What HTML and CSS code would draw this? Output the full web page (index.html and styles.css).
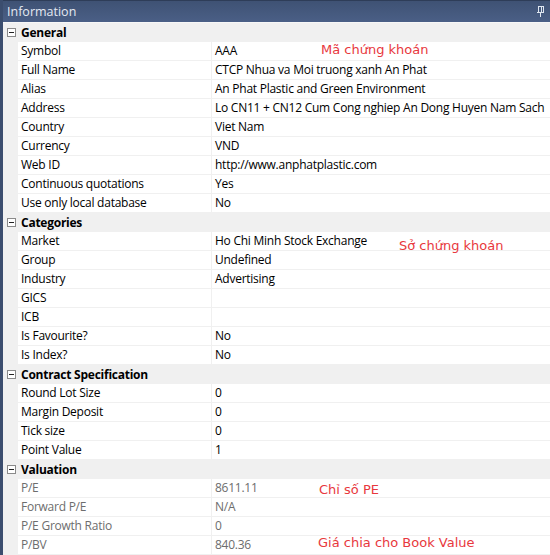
FILE: index.html
```html
<!DOCTYPE html>
<html>
<head>
<meta charset="utf-8">
<link rel="stylesheet" href="styles.css">
</head>
<body>
<div class="panel">
  <div class="titlebar">
    <span class="title">Information</span>
    <svg class="pin" width="9" height="12" viewBox="0 0 9 12"><path d="M2 1h5M2 1v6M7 1v6M5 1v6M1 7h7M4.5 7v5" stroke="#dfe6f0" stroke-width="1" fill="none" shape-rendering="crispEdges"/></svg>
  </div>
  <div class="grid">
    <div class="section"><span class="toggle"></span><span class="stitle">General</span></div>
    <div class="row"><div class="label">Symbol</div><div class="value">AAA</div></div>
    <div class="row"><div class="label">Full Name</div><div class="value">CTCP Nhua va Moi truong xanh An Phat</div></div>
    <div class="row"><div class="label">Alias</div><div class="value">An Phat Plastic and Green Environment</div></div>
    <div class="row"><div class="label">Address</div><div class="value">Lo CN11 + CN12 Cum Cong nghiep An Dong Huyen Nam Sach</div></div>
    <div class="row"><div class="label">Country</div><div class="value">Viet Nam</div></div>
    <div class="row"><div class="label">Currency</div><div class="value">VND</div></div>
    <div class="row"><div class="label">Web ID</div><div class="value">http://www.anphatplastic.com</div></div>
    <div class="row"><div class="label">Continuous quotations</div><div class="value">Yes</div></div>
    <div class="row"><div class="label">Use only local database</div><div class="value">No</div></div>
    <div class="section"><span class="toggle"></span><span class="stitle">Categories</span></div>
    <div class="row"><div class="label">Market</div><div class="value">Ho Chi Minh Stock Exchange</div></div>
    <div class="row"><div class="label">Group</div><div class="value">Undefined</div></div>
    <div class="row"><div class="label">Industry</div><div class="value">Advertising</div></div>
    <div class="row"><div class="label">GICS</div><div class="value"></div></div>
    <div class="row"><div class="label">ICB</div><div class="value"></div></div>
    <div class="row"><div class="label">Is Favourite?</div><div class="value">No</div></div>
    <div class="row"><div class="label">Is Index?</div><div class="value">No</div></div>
    <div class="section"><span class="toggle"></span><span class="stitle">Contract Specification</span></div>
    <div class="row"><div class="label">Round Lot Size</div><div class="value">0</div></div>
    <div class="row"><div class="label">Margin Deposit</div><div class="value">0</div></div>
    <div class="row"><div class="label">Tick size</div><div class="value">0</div></div>
    <div class="row"><div class="label">Point Value</div><div class="value">1</div></div>
    <div class="section"><span class="toggle"></span><span class="stitle">Valuation</span></div>
    <div class="row ro"><div class="label">P/E</div><div class="value">8611.11</div></div>
    <div class="row ro"><div class="label">Forward P/E</div><div class="value">N/A</div></div>
    <div class="row ro"><div class="label">P/E Growth Ratio</div><div class="value">0</div></div>
    <div class="row ro"><div class="label">P/BV</div><div class="value">840.36</div></div>
  </div>
  <div class="note n1">Mã chứng khoán</div>
  <div class="note n2">Sở chứng khoán</div>
  <div class="note n3">Chỉ số PE</div>
  <div class="note n4">Giá chia cho Book Value</div>
</div>
</body>
</html>
```
FILE: styles.css
```css
html, body { margin: 0; padding: 0; background: #ffffff; }
body { width: 550px; height: 555px; overflow: hidden; font-family: "Open Sans", "Noto Sans", sans-serif; font-size: 12px; letter-spacing: -0.25px; color: #000; }
.panel { position: relative; width: 550px; height: 555px; border-left: 3px solid #3b4d6e; box-sizing: border-box; background: #f0f0f0; }
.titlebar { height: 22px; box-sizing: border-box; border-top: 1px solid #2e3d58; background: linear-gradient(#3f5274, #4a5f86); display: flex; align-items: center; justify-content: space-between; padding: 0 5px 1px 4px; }
.title { color: #e4e9f2; font-size: 12.5px; letter-spacing: 0; }
.pin { display: block; }
.grid { display: flex; flex-direction: column; border-top: 1px solid #f7f7f7; }
.section { height: 19px; display: flex; align-items: center; background: #f0f0f0; box-sizing: border-box; }
.toggle { width: 9px; height: 9px; box-sizing: border-box; border: 1px solid #8a8a8a; background: #fff; margin: 0 5px 0 4px; position: relative; }
.toggle::after { content: ""; position: absolute; left: 1px; top: 3px; width: 5px; height: 1px; background: #222; }
.stitle { font-weight: bold; margin-left: 0; }
.row { height: 19px; display: flex; margin-left: 15px; background: #fff; box-sizing: border-box; border-bottom: 1px solid #f0f0f0; }
.label { width: 194px; flex: none; box-sizing: border-box; padding-left: 3px; border-right: 1px solid #f0f0f0; line-height: 18px; white-space: nowrap; overflow: hidden; }
.value { flex: 1; padding-left: 3px; line-height: 18px; white-space: nowrap; overflow: hidden; }
.ro .label, .ro .value { color: #6d6d6d; }
.note { position: absolute; color: #e8383d; font-size: 13px; letter-spacing: 0; font-family: "DejaVu Sans", sans-serif; white-space: nowrap; }
.n1 { left: 318px; top: 42px; }
.n2 { left: 396px; top: 238px; }
.n3 { left: 316px; top: 482px; }
.n4 { left: 315px; top: 535px; }
```
